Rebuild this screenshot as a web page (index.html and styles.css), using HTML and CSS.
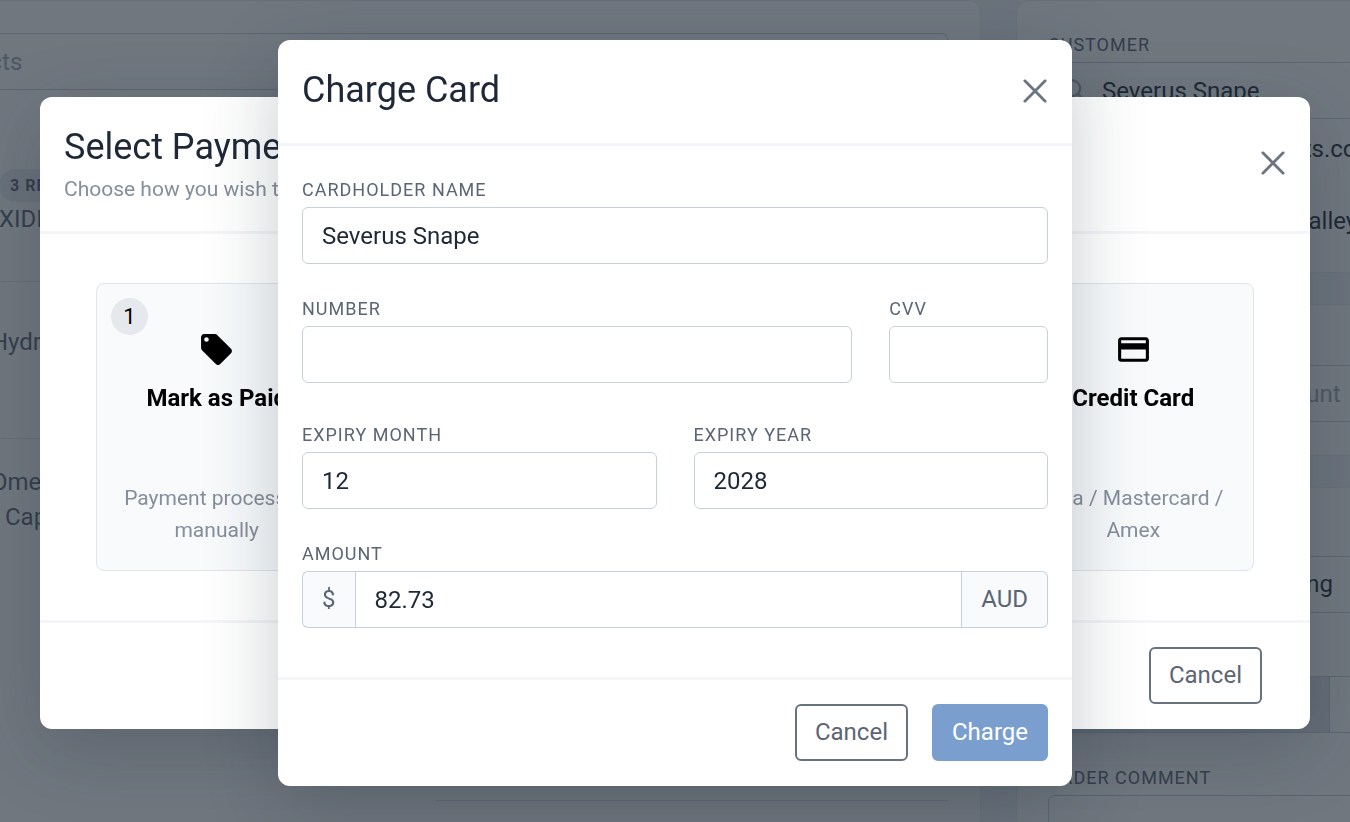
FILE: index.html
```html
<!DOCTYPE html>
<html lang="en">
<head>
  <meta charset="UTF-8" />
  <meta name="viewport" content="width=device-width, initial-scale=1.0"/>
  <title>Charge Card</title>
  <link rel="stylesheet" href="styles.css">
</head>
<body>

  <div class="page">
    <main class="panel products">
      <input class="input" type="search" placeholder="Search products" aria-label="Search products">
      <div class="results"><span class="results-badge">3 RESULTS</span></div>
      <div class="product first">XIDIZER</div>
      <div class="product">Hydroponic<span class="product-sub">&nbsp;</span></div>
      <div class="product">Omega<span class="product-sub">Capsules</span></div>
      <div class="totals"></div>
    </main>

    <aside class="sidebar">
      <section class="panel customer">
        <label class="label" for="customer">Customer</label>
        <div class="search-field">
          <svg class="search-icon" viewBox="0 0 24 24" fill="none" stroke="currentColor" stroke-width="2" stroke-linecap="round"><circle cx="10" cy="10" r="7"/><path d="M21 21l-6-6"/></svg>
          <input class="input" id="customer" type="text" value="Severus Snape">
        </div>
        <p class="detail">severus.sna@hogwarts.com</p>
        <p class="detail address">12 Spinners End, the valley</p>
      </section>
      <section class="panel discount">
        <input class="input" type="text" placeholder="Enter a code for discount" aria-label="Discount">
      </section>
      <section class="panel shipping">
        <select class="input" aria-label="Shipping"><option>Standard parcel shipping</option></select>
        <div class="group shipping-cost">
          <span class="addon"></span>
          <input class="input" type="text" aria-label="Shipping cost">
        </div>
        <label class="label" for="comment">Order comment</label>
        <textarea class="input comment" id="comment"></textarea>
      </section>
    </aside>
  </div>

  <div class="backdrop"></div>

  <div class="overlay overlay-payment">
    <div class="modal" role="dialog" aria-labelledby="payment-title">
      <header class="modal-header">
        <div>
          <h2 class="modal-title" id="payment-title">Select Payment</h2>
          <p class="modal-subtitle">Choose how you wish to pay</p>
        </div>
        <button class="close" type="button" aria-label="Close">
          <svg viewBox="0 0 26 26" fill="none" stroke="currentColor" stroke-width="3" stroke-linecap="round"><path d="M2 2l22 22M24 2L2 24"/></svg>
        </button>
      </header>
      <div class="methods">
        <button class="method" type="button">
          <span class="method-number">1</span>
          <svg class="method-icon" viewBox="0 0 24 24" fill="currentColor"><path d="M5.5,7A1.5,1.5 0 0,1 4,5.5A1.5,1.5 0 0,1 5.5,4A1.5,1.5 0 0,1 7,5.5A1.5,1.5 0 0,1 5.5,7M21.41,11.58L12.41,2.58C12.05,2.22 11.55,2 11,2H4C2.89,2 2,2.89 2,4V11C2,11.55 2.22,12.05 2.59,12.41L11.58,21.41C11.95,21.77 12.45,22 13,22C13.55,22 14.05,21.77 14.41,21.41L21.41,14.41C21.78,14.05 22,13.55 22,13C22,12.44 21.77,11.94 21.41,11.58Z"/></svg>
          <span class="method-name">Mark as Paid</span>
          <span class="method-text">Payment processed manually</span>
        </button>
        <button class="method last" type="button">
          <svg class="method-icon" viewBox="0 0 24 24" fill="currentColor"><path d="M20,8H4V6H20M20,18H4V12H20M20,4H4C2.89,4 2,4.89 2,6V18C2,19.1 2.9,20 4,20H20C21.1,20 22,19.1 22,18V6C22,4.89 21.1,4 20,4Z"/></svg>
          <span class="method-name">Credit Card</span>
          <span class="method-text">Visa / Mastercard / Amex</span>
        </button>
      </div>
      <footer class="modal-footer wide">
        <button class="btn btn-outline" type="button">Cancel</button>
      </footer>
    </div>
  </div>

  <div class="overlay overlay-charge">
    <form class="modal modal-small" role="dialog" aria-labelledby="charge-title">
      <header class="modal-header">
        <h2 class="modal-title" id="charge-title">Charge Card</h2>
        <button class="close" type="button" aria-label="Close">
          <svg viewBox="0 0 26 26" fill="none" stroke="currentColor" stroke-width="3" stroke-linecap="round"><path d="M2 2l22 22M24 2L2 24"/></svg>
        </button>
      </header>
      <div class="modal-body">
        <div class="field">
          <label class="label" for="name">Cardholder name</label>
          <input class="input" id="name" type="text" value="Severus Snape">
        </div>
        <div class="row">
          <div class="field col-9">
            <label class="label" for="number">Number</label>
            <input class="input" id="number" type="text">
          </div>
          <div class="field col-3">
            <label class="label" for="cvv">CVV</label>
            <input class="input" id="cvv" type="text">
          </div>
        </div>
        <div class="row row-expiry">
          <div class="field col-6">
            <label class="label" for="month">Expiry month</label>
            <input class="input" id="month" type="text" value="12">
          </div>
          <div class="field col-6">
            <label class="label" for="year">Expiry year</label>
            <input class="input" id="year" type="text" value="2028">
          </div>
        </div>
        <div class="field">
          <label class="label" for="amount">Amount</label>
          <div class="group">
            <span class="addon">$</span>
            <input class="input" id="amount" type="text" value="82.73">
            <span class="addon">AUD</span>
          </div>
        </div>
      </div>
      <footer class="modal-footer">
        <button class="btn btn-outline" type="button">Cancel</button>
        <button class="btn btn-primary" type="submit">Charge</button>
      </footer>
    </form>
  </div>

</body>
</html>
```
FILE: styles.css
```css
* { box-sizing: border-box; }
body {
  margin: 0;
  height: 100vh;
  overflow: hidden;
  background-color: #f1f4f8;
  color: #1e2836;
  font-family: Roboto, sans-serif;
  font-size: 24px;
  line-height: 35px;
}
h2, p { margin: 0; font-weight: 400; }
button, input, select, textarea { font: inherit; color: inherit; }
button { cursor: pointer; }

/* form controls */
.label {
  display: block;
  padding-top: 1px;
  margin-bottom: 3px;
  color: #5b6574;
  font-size: 18px;
  line-height: 28px;
  letter-spacing: 1px;
  text-transform: uppercase;
}
.input {
  display: block;
  width: 100%;
  height: 57px;
  padding: 0 19px;
  background-color: white;
  border: 1px solid #c6d0dc;
  border-radius: 6px;
  appearance: none;
}
.input::placeholder { color: #a0a8b4; opacity: 1; }
.group { display: flex; }
.group .input { flex: 1; min-width: 0; border-radius: 0; }
.addon {
  display: flex;
  align-items: center;
  padding: 0 19px;
  background-color: #f8fafc;
  border: 1px solid #c6d0dc;
  color: #5b6574;
}
.addon:first-child { border-right: 0; border-radius: 6px 0 0 6px; }
.addon:last-child { border-left: 0; border-radius: 0 6px 6px 0; }
.btn {
  height: 57px;
  padding: 0 18px;
  border: 2px solid transparent;
  border-radius: 6px;
}
.btn-outline { background-color: white; border-color: #69727f; color: #5b6574; }
.btn-primary { background-color: #7a9fce; border-color: #7a9fce; color: white; }

/* order page behind the dialogs, runs off both sides of the window */
.page {
  display: flex;
  align-items: flex-start;
  gap: 35px;
  margin: 0 -120px 0 -205px;
  height: 100vh;
  overflow: hidden;
}
.panel {
  background-color: white;
  border: 1px solid #e6eaf0;
  border-radius: 12px;
}
.products { flex: 1; height: 900px; padding: 32px 32px 0; }
.results { margin: 77px 0 0 171px; line-height: 33px; }
.results-badge {
  display: inline-block;
  padding: 0 11px;
  background-color: #e9edf2;
  border-radius: 16px;
  color: #5b6574;
  font-size: 16px;
  font-weight: 700;
  letter-spacing: 1px;
}
.product {
  display: flex;
  flex-direction: column;
  justify-content: center;
  height: 157px;
  padding-left: 163px;
  border-top: 1px solid #dde3ea;
  color: #5b6574;
}
.product.first { justify-content: flex-start; height: 79px; padding-left: 171px; border-top: 0; }
.product-sub { padding-left: 14px; }
.product:nth-of-type(4) { height: 123px; }
.totals { margin: 239px 0 0 608px; border-top: 1px solid #dde3ea; }

.sidebar { flex: 0 0 454px; }
.sidebar .panel { padding: 0 31px; }
.sidebar .panel + .panel { margin-top: 31px; }
.sidebar .customer { height: 273px; padding-top: 29px; }
.search-field { display: flex; align-items: center; }
.search-icon {
  flex: none;
  width: 27px;
  margin: 0 -40px 0 13px;
  color: #a0a8b4;
}
.search-field .input { padding-left: 53px; background: none; }
.detail { margin-top: 13px; padding-left: 26px; white-space: nowrap; }
.address { margin-top: 37px; }
.sidebar .discount { height: 152px; padding-top: 60px; }
.discount .input { padding: 0 24px; }
.sidebar .shipping { height: 500px; padding-top: 68px; }
.shipping-cost { margin: 63px 0 30px; }
.shipping-cost .addon { flex: 0 0 281px; background-color: #dde3ea; }
.comment { height: 150px; }

.backdrop {
  position: fixed;
  inset: 0;
  background-color: rgba(32, 42, 54, 0.64);
}

/* dialogs */
.overlay {
  position: fixed;
  inset: 0;
  display: flex;
  align-items: flex-start;
  justify-content: center;
  padding: 97px 40px 0;
}
.overlay-charge { padding-top: 40px; }
.modal {
  width: 100%;
  background-color: white;
  border-radius: 12px;
  box-shadow: 0 20px 75px rgba(24, 36, 51, 0.24);
}
.modal-small { max-width: 794px; }
.modal-header {
  display: flex;
  align-items: center;
  justify-content: space-between;
  padding: 24px 25px 26px 24px;
  border-bottom: 3px solid #f3f5f8;
}
.modal-title { font-size: 36px; line-height: 53px; }
.modal-subtitle { color: #858e9b; font-size: 21px; line-height: 31px; }
.close {
  display: flex;
  padding: 0;
  background: none;
  border: 0;
  color: #6b7480;
}
.close svg { width: 24px; height: 24px; }
.modal-body { padding: 29px 24px 49px; }
.field + .row, .row + .field { margin-top: 30px; }
.row {
  display: grid;
  grid-template-columns: repeat(12, 1fr);
  column-gap: 37px;
}
.row-expiry { margin-top: 37px; }
.col-9 { grid-column: span 9; }
.col-6 { grid-column: span 6; }
.col-3 { grid-column: span 3; }
.modal-footer {
  display: flex;
  justify-content: flex-end;
  gap: 24px;
  padding: 24px 24px 25px;
  border-top: 3px solid #f3f5f8;
}
.modal-footer.wide { padding-right: 48px; }

.methods {
  display: grid;
  grid-template-columns: repeat(4, 1fr);
  gap: 64px;
  padding: 49px 56px;
}
.method {
  position: relative;
  display: flex;
  flex-direction: column;
  align-items: center;
  padding: 47px 23px 24px;
  background-color: #f8fafc;
  border: 1px solid #e0e5eb;
  border-radius: 8px;
  color: black;
}
.method.last { grid-column: 4; }
.method-number {
  position: absolute;
  top: 14px;
  left: 14px;
  width: 37px;
  height: 37px;
  background-color: #e5e8ec;
  border-radius: 50%;
  font-size: 22px;
  line-height: 37px;
}
.method-icon { width: 37px; height: 37px; }
.method-name { margin: 12px 0 66px; font-weight: 700; line-height: 36px; white-space: nowrap; }
.method-text { color: #858e9b; font-size: 21px; line-height: 32px; }
```
